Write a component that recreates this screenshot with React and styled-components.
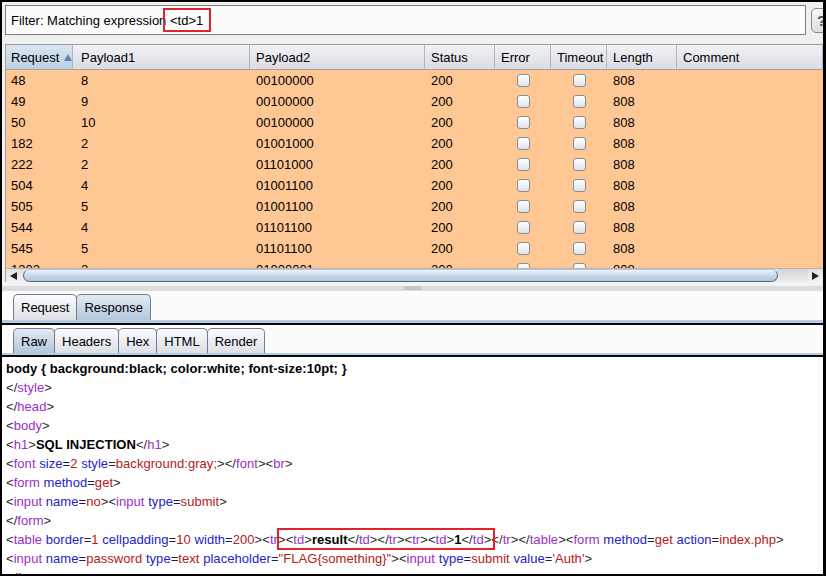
import React from 'react'
import styled, { createGlobalStyle } from 'styled-components'

const GlobalStyle = createGlobalStyle`
  body {
    margin: 0;
    font-family: "Liberation Sans", Arial, sans-serif;
    font-size: 13px;
    color: #000;
  }
`

const Frame = styled.div`
  width: 826px;
  height: 576px;
  box-sizing: border-box;
  border: solid #000;
  border-width: 2px 3px 2px 2px;
  background: #f0f0f0;
  display: flex;
  flex-direction: column;
  overflow: hidden;
`

const FilterRow = styled.div`
  display: flex;
  align-items: center;
  gap: 5px;
  padding: 3px 0 0 3px;
`

const FilterBox = styled.div`
  width: 801px;
  height: 30px;
  flex: none;
  box-sizing: border-box;
  border: 1px solid #7f7f7f;
  background: #fcfcfc;
  display: flex;
  align-items: center;
  padding-left: 5px;
  white-space: pre;
`

const Marked = styled.span`
  position: relative;
  &::after {
    content: '';
    position: absolute;
    top: ${(p) => p.$top}px;
    bottom: ${(p) => p.$bottom}px;
    left: ${(p) => p.$left}px;
    right: ${(p) => p.$right}px;
    border: 2px solid #e3212b;
    pointer-events: none;
  }
`

const HelpButton = styled.div`
  width: 24px;
  height: 25px;
  flex: none;
  box-sizing: border-box;
  border: 1px solid #8c8c8c;
  border-radius: 5px;
  background: linear-gradient(#fafafa, #dcdcdc);
  font-weight: bold;
  font-size: 15px;
  color: #555;
  padding-left: 5px;
  line-height: 23px;
`

const Table = styled.div`
  margin: 9px 0 0 3px;
  border-left: 1px solid #a0a0a0;
`

const cols = '67px 177px 175px 70px 56px 56px 70px 1fr'
const pads = [5, 8, 6, 6, 6, 6, 6, 6]

const HeaderRow = styled.div`
  display: grid;
  grid-template-columns: ${cols};
  height: 26px;
  box-sizing: border-box;
  border-top: 1px solid #9c9c9c;
  border-bottom: 1px solid #a3a3a3;
`

const HeaderCell = styled.div`
  display: flex;
  align-items: center;
  gap: 5px;
  padding-left: ${(p) => p.$pad}px;
  border-right: 1px solid #b3b6be;
  background: ${(p) =>
    p.$selected
      ? 'linear-gradient(#dbe6f1, #bccfe2)'
      : 'linear-gradient(#f1f2f5, #dadce3)'};
`

const SortArrow = styled.span`
  width: 0;
  height: 0;
  border-left: 4px solid transparent;
  border-right: 4px solid transparent;
  border-bottom: 7px solid #5f86b3;
`

const Body = styled.div`
  height: 198px;
  overflow: hidden;
  background: #ffc794;
`

const Row = styled.div`
  display: grid;
  grid-template-columns: ${cols};
  height: 21px;
`

const Cell = styled.div`
  display: flex;
  align-items: center;
  justify-content: ${(p) => (p.$center ? 'center' : 'flex-start')};
  padding-left: ${(p) => (p.$center ? 0 : p.$pad)}px;
`

const Check = styled.span`
  width: 13px;
  height: 13px;
  box-sizing: border-box;
  border: 1px solid #878c96;
  border-radius: 3px;
  background: linear-gradient(#ffffff, #dfe2e7);
`

const HScroll = styled.div`
  height: 14px;
  display: flex;
  align-items: stretch;
  background: linear-gradient(#e2e2e2, #f2f2f2);
  border-top: 1px solid #b4b4b4;
  box-sizing: border-box;
`

const Arrow = styled.div`
  width: 15px;
  flex: none;
  display: flex;
  align-items: center;
  justify-content: center;
  &::before {
    content: '';
    border-top: 4px solid transparent;
    border-bottom: 4px solid transparent;
    ${(p) =>
      p.$dir === 'left'
        ? 'border-right: 7px solid #222;'
        : 'border-left: 7px solid #222;'}
  }
`

const Thumb = styled.div`
  margin-left: 2px;
  width: 755px;
  box-sizing: border-box;
  border: 1px solid #52667c;
  border-top-color: #b4c6d8;
  border-radius: 12px;
  background: linear-gradient(#eef3f9, #c2d4e6 60%, #b1c6dc);
`

const Track = styled.div`
  flex: 1;
  background: linear-gradient(#d6d6d6, #ebebeb);
`

const Divider = styled.div`
  height: 9px;
  display: flex;
  justify-content: center;
  align-items: flex-end;
  background: linear-gradient(#f4f4f4 40%, #dcdcdc 40%);
`

const Grip = styled.div`
  width: 18px;
  height: 4px;
  margin-bottom: 1px;
  border-radius: 2px 2px 0 0;
  background: #c6c6c6;
`

const Lower = styled.div`
  flex: 1;
  min-height: 0;
  display: flex;
  flex-direction: column;
  background: #fcfcfc;
`

const TabBand = styled.div`
  border-bottom: 2px solid #0a0a0a;
`

const TabStrip = styled.div`
  display: flex;
  padding: 3px 0 0 11px;
  border-bottom: ${(p) => p.$band}px solid #b7cce2;
`

const Tab = styled.div`
  height: ${(p) => p.$h}px;
  box-sizing: border-box;
  padding: 0 7px;
  display: flex;
  align-items: center;
  border: 1px solid #6f7e8e;
  border-bottom: none;
  border-radius: 5px 5px 0 0;
  margin-right: -1px;
  background: ${(p) =>
    p.$active
      ? 'linear-gradient(#e2eaf3, #b3c7dc)'
      : 'linear-gradient(#fbfcfd, #dce0e6)'};
`

const Editor = styled.div`
  flex: 1;
  min-height: 0;
  overflow: hidden;
  background: #fff;
  padding: 2px 0 0 4px;
  line-height: 19px;
  white-space: pre;
  letter-spacing: 0.05px;
`

const Line = styled.div`
  height: 19px;
`

const colors = {
  br: '#2a2a2a',
  tag: '#9b2ec8',
  attr: '#2323c8',
  eq: '#1f1f4f',
  val: '#b32020',
  sp: '#000',
}

const Tok = styled.span`
  color: ${(p) => colors[p.$k] || '#000'};
  font-weight: ${(p) => (p.$k === 'text' ? 'bold' : 'normal')};
`

function tokenize(src) {
  const out = []
  const re = /<(\/?)(\w+)([^>]*)>|([^<]+)/g
  let m
  while ((m = re.exec(src))) {
    if (m[4] !== undefined) {
      out.push(['text', m[4]])
      continue
    }
    out.push(['br', '<' + m[1]])
    out.push(['tag', m[2]])
    const ar = /(\s+)([\w-]+)(=)('[^']*'|"[^"]*"|[^\s>]+)/g
    let a
    while ((a = ar.exec(m[3]))) {
      out.push(['sp', a[1]])
      out.push(['attr', a[2]])
      out.push(['eq', a[3]])
      out.push(['val', a[4]])
    }
    out.push(['br', '>'])
  }
  return out
}

const Code = ({ src }) =>
  tokenize(src).map(([k, t], i) => (
    <Tok key={i} $k={k}>
      {t}
    </Tok>
  ))

const rows = [
  [48, 8, '00100000'],
  [49, 9, '00100000'],
  [50, 10, '00100000'],
  [182, 2, '01001000'],
  [222, 2, '01101000'],
  [504, 4, '01001100'],
  [505, 5, '01001100'],
  [544, 4, '01101100'],
  [545, 5, '01101100'],
  [1303, 3, '01000001'],
]

const headers = ['Request', 'Payload1', 'Payload2', 'Status', 'Error', 'Timeout', 'Length', 'Comment']

const lines = [
  'body { background:black; color:white; font-size:10pt; }',
  '</style>',
  '</head>',
  '<body>',
  '<h1>SQL INJECTION</h1>',
  '<font size=2 style=background:gray;></font><br>',
  '<form method=get>',
  '<input name=no><input type=submit>',
  '</form>',
  null,
  '<input name=password type=text placeholder="FLAG{something}"><input type=submit value=\'Auth\'>',
  '</form>',
]

const App = () => {
  return (
    <>
      <GlobalStyle />
      <Frame>
        <FilterRow>
          <FilterBox>
            {'Filter: Matching expression '}
            <Marked $top={-5} $bottom={-4} $left={-7} $right={-8}>
              {'<td>1'}
            </Marked>
          </FilterBox>
          <HelpButton>?</HelpButton>
        </FilterRow>

        <Table>
          <HeaderRow>
            {headers.map((h, i) => (
              <HeaderCell key={h} $selected={i === 0} $pad={pads[i]}>
                {h}
                {i === 0 && <SortArrow />}
              </HeaderCell>
            ))}
          </HeaderRow>
          <Body>
            {rows.map(([req, p1, p2]) => (
              <Row key={req}>
                <Cell $pad={pads[0]}>{req}</Cell>
                <Cell $pad={pads[1]}>{p1}</Cell>
                <Cell $pad={pads[2]}>{p2}</Cell>
                <Cell $pad={pads[3]}>200</Cell>
                <Cell $center>
                  <Check />
                </Cell>
                <Cell $center>
                  <Check />
                </Cell>
                <Cell $pad={pads[6]}>808</Cell>
                <Cell $pad={pads[7]} />
              </Row>
            ))}
          </Body>
          <HScroll>
            <Arrow $dir="left" />
            <Thumb />
            <Track />
            <Arrow $dir="right" />
          </HScroll>
        </Table>

        <Divider>
          <Grip />
        </Divider>

        <Lower>
          <TabBand>
            <TabStrip $band={3}>
              <Tab $h={26}>Request</Tab>
              <Tab $h={26} $active>
                Response
              </Tab>
            </TabStrip>
          </TabBand>
          <TabBand>
            <TabStrip $band={2}>
              <Tab $h={25} $active>
                Raw
              </Tab>
              <Tab $h={25}>Headers</Tab>
              <Tab $h={25}>Hex</Tab>
              <Tab $h={25}>HTML</Tab>
              <Tab $h={25}>Render</Tab>
            </TabStrip>
          </TabBand>
          <Editor>
            {lines.map((l, i) =>
              l === null ? (
                <Line key={i}>
                  <Code src="<table border=1 cellpadding=10 width=200><tr>" />
                  <Marked $top={-4} $bottom={-3} $left={-9} $right={-4}>
                    <Code src="<td>result</td></tr><tr><td>1</td>" />
                  </Marked>
                  <Code src="</tr></table><form method=get action=index.php>" />
                </Line>
              ) : (
                <Line key={i}>
                  <Code src={l} />
                </Line>
              )
            )}
          </Editor>
        </Lower>
      </Frame>
    </>
  )
}

export default App
